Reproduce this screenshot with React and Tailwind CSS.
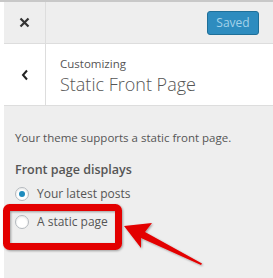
const Radio = ({ checked, label }) => (
  <label className="flex items-center h-[28px]">
    <span className="w-[14px] h-[14px] rounded-full border border-[#b4b9be] bg-white shadow-[inset_0_1px_2px_rgba(0,0,0,0.1)] flex items-center justify-center">
      {checked && <span className="w-[6px] h-[6px] rounded-full bg-[#1e8cbe]"></span>}
    </span>
    <span className="ml-[8px] text-[12px] text-[#555]">{label}</span>
  </label>
);

const App = () => {
  return (
    <div
      className="relative w-[273px] h-[278px] overflow-hidden bg-white border-t-2 border-[#c8c8c8] pl-[4px] flex flex-col"
      style={{ fontFamily: '"Open Sans", "Noto Sans", sans-serif' }}
    >
      <div className="h-[42px] bg-[#eee] border-b border-[#ddd] flex items-center">
        <div className="w-[42px] h-full border-r border-[#ddd] flex items-center justify-center">
          <svg width="11" height="11" viewBox="0 0 11 11">
            <path d="M1.5 1.5 L9.5 9.5 M9.5 1.5 L1.5 9.5" stroke="#333" strokeWidth="2.2" />
          </svg>
        </div>
        <div className="flex-1 flex justify-end pr-[14px]">
          <button className="w-[52px] h-[24px] rounded-[3px] bg-[#2e8cbf] border border-[#1f6f98] text-[12px] text-[#a3d2ea] leading-none">
            Saved
          </button>
        </div>
      </div>

      <div className="h-[62px] bg-white border-b border-[#ddd] flex">
        <div className="w-[42px] h-full border-r border-[#ddd] flex items-center justify-center">
          <svg width="8" height="12" viewBox="0 0 8 12">
            <path d="M6 1.5 L2 6 L6 10.5" stroke="#222" strokeWidth="2" fill="none" />
          </svg>
        </div>
        <div className="pl-[14px] pt-[11px] flex flex-col">
          <span className="text-[11.5px] leading-[17px] text-[#555]">Customizing</span>
          <span className="text-[18px] leading-[25px] font-light text-[#555]">Static Front Page</span>
        </div>
      </div>

      <div className="flex-1 bg-[#eee] px-[11px] pt-[23px]">
        <p className="text-[11.5px] leading-[18px] text-[#555]">Your theme supports a static front page.</p>
        <h3 className="mt-[13px] text-[12.5px] leading-[20px] font-semibold text-[#555]">Front page displays</h3>
        <div className="flex flex-col">
          <Radio checked label="Your latest posts" />
          <Radio label="A static page" />
        </div>
      </div>

      <svg className="absolute inset-0 pointer-events-none" width="273" height="278" viewBox="0 0 273 278">
        <defs>
          <filter id="sh" x="-20%" y="-20%" width="140%" height="140%">
            <feDropShadow dx="1" dy="1" stdDeviation="0.8" floodColor="#000" floodOpacity="0.35" />
          </filter>
        </defs>
        <rect x="6.5" y="205.5" width="112" height="39" rx="3" fill="none" stroke="#e30000" strokeWidth="7" filter="url(#sh)" />
        <path
          d="M124 224 L152 221 L145 230 L202 261.5 L201 263 L141 236 L141 246 Z"
          fill="#e30000"
          filter="url(#sh)"
        />
      </svg>
    </div>
  );
};

export default App;
